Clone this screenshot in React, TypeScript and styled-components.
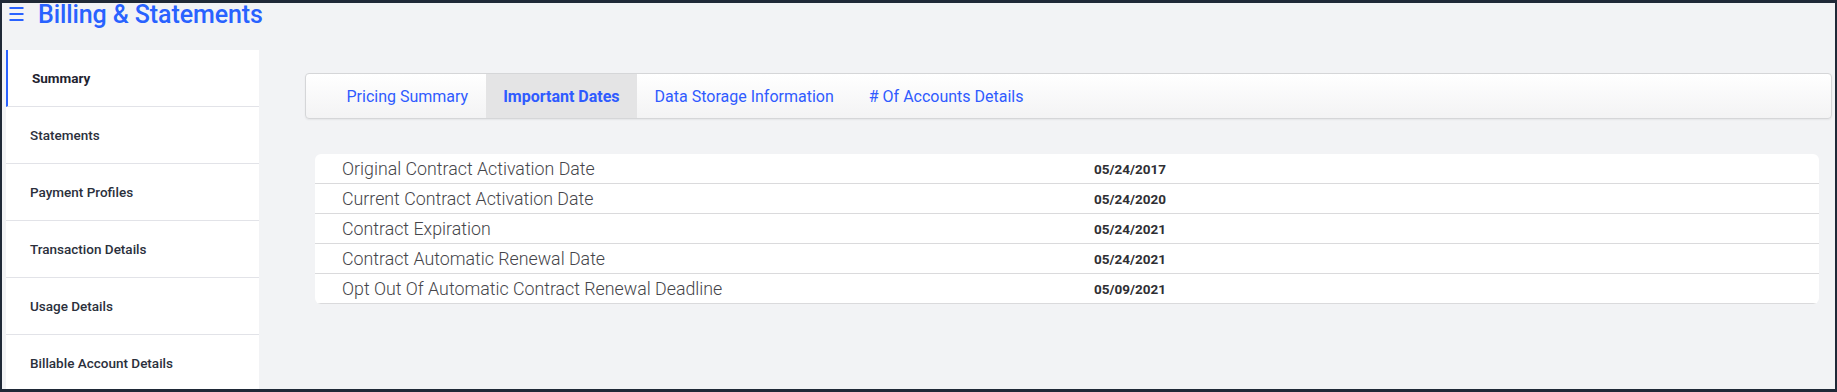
import React from "react";
import styled, { createGlobalStyle } from "styled-components";

const GlobalStyle = createGlobalStyle`
  html, body { margin: 0; padding: 0; }
  body { font-family: Roboto, "Liberation Sans", Arial, sans-serif; background: #f2f3f5; }
  * { box-sizing: border-box; }
`;

const Frame = styled.div`
  height: 392px;
  overflow: hidden;
  background: #f2f3f5;
  border-style: solid;
  border-color: #1f2937;
  border-width: 3px 2px 3px 2px;
  display: flex;
  flex-direction: column;
`;

const Header = styled.header`
  height: 47px;
  flex: none;
  display: flex;
  align-items: flex-start;
  gap: 14px;
  padding-left: 7px;
`;

const MenuIcon = styled.span`
  height: 22px;
  display: flex;
  align-items: center;
  color: #2962ff;
`;

const Title = styled.h1`
  margin: 0;
  font-size: 25px;
  line-height: 23px;
  font-weight: 500;
  color: #2962ff;
  letter-spacing: -0.1px;
`;

const Body = styled.div`
  flex: 1;
  display: flex;
  padding-left: 4px;
  min-height: 0;
`;

const Sidebar = styled.nav`
  width: 253px;
  flex: none;
  background: #ffffff;
  display: flex;
  flex-direction: column;
`;

const NavItem = styled.div<{ $active?: boolean }>`
  height: 57px;
  flex: none;
  display: flex;
  align-items: center;
  padding-left: 24px;
  border-bottom: 1px solid #e2e3e8;
  border-left: ${(p) => (p.$active ? "2px solid #2962ff" : "none")};
  font-size: 13.5px;
  font-weight: ${(p) => (p.$active ? 700 : 500)};
  color: ${(p) => (p.$active ? "#1f2430" : "#2b303c")};
`;

const Main = styled.main`
  flex: 1;
  padding: 23px 3px 0 46px;
  display: flex;
  flex-direction: column;
`;

const TabBar = styled.div`
  height: 46px;
  border: 1px solid #d5d6d8;
  border-radius: 4px;
  background: linear-gradient(#ffffff, #f3f3f4);
  box-shadow: 0 1px 2px rgba(0, 0, 0, 0.06);
  display: flex;
  align-items: stretch;
  padding-left: 23px;
`;

const Tab = styled.div<{ $active?: boolean }>`
  display: flex;
  align-items: center;
  padding: 0 17.5px;
  font-size: 16px;
  font-weight: ${(p) => (p.$active ? 700 : 400)};
  color: #2f5bff;
  background: ${(p) => (p.$active ? "#e4e4e5" : "transparent")};
  white-space: nowrap;
`;

const Card = styled.div`
  margin: 35px 13px 0 10px;
  background: #ffffff;
  border-radius: 6px;
  overflow: hidden;
  display: flex;
  flex-direction: column;
`;

const Row = styled.div`
  height: 30px;
  display: grid;
  grid-template-columns: 1fr 1fr;
  align-items: center;
  border-bottom: 1px solid #dadadc;
`;

const Label = styled.div`
  padding-left: 27px;
  font-size: 17.8px;
  font-weight: 300;
  color: #45454a;
  white-space: nowrap;
`;

const Value = styled.div`
  padding-left: 27px;
  font-size: 13.5px;
  font-weight: 700;
  color: #2f2f33;
`;

const navItems = [
  "Summary",
  "Statements",
  "Payment Profiles",
  "Transaction Details",
  "Usage Details",
  "Billable Account Details",
];

const tabs = [
  "Pricing Summary",
  "Important Dates",
  "Data Storage Information",
  "# Of Accounts Details",
];

const dates: [string, string][] = [
  ["Original Contract Activation Date", "05/24/2017"],
  ["Current Contract Activation Date", "05/24/2020"],
  ["Contract Expiration", "05/24/2021"],
  ["Contract Automatic Renewal Date", "05/24/2021"],
  ["Opt Out Of Automatic Contract Renewal Deadline", "05/09/2021"],
];

export default function App() {
  return (
    <>
      <GlobalStyle />
      <Frame>
        <Header>
          <MenuIcon>
            <svg width="15" height="14" viewBox="0 0 15 14" fill="currentColor">
              <rect x="0.5" y="0" width="14" height="2" />
              <rect x="0.5" y="6" width="14" height="2" />
              <rect x="0.5" y="12" width="14" height="2" />
            </svg>
          </MenuIcon>
          <Title>Billing &amp; Statements</Title>
        </Header>
        <Body>
          <Sidebar>
            {navItems.map((item, i) => (
              <NavItem key={item} $active={i === 0}>
                {item}
              </NavItem>
            ))}
          </Sidebar>
          <Main>
            <TabBar>
              {tabs.map((t, i) => (
                <Tab key={t} $active={i === 1}>
                  {t}
                </Tab>
              ))}
            </TabBar>
            <Card>
              {dates.map(([label, value]) => (
                <Row key={label}>
                  <Label>{label}</Label>
                  <Value>{value}</Value>
                </Row>
              ))}
            </Card>
          </Main>
        </Body>
      </Frame>
    </>
  );
}
